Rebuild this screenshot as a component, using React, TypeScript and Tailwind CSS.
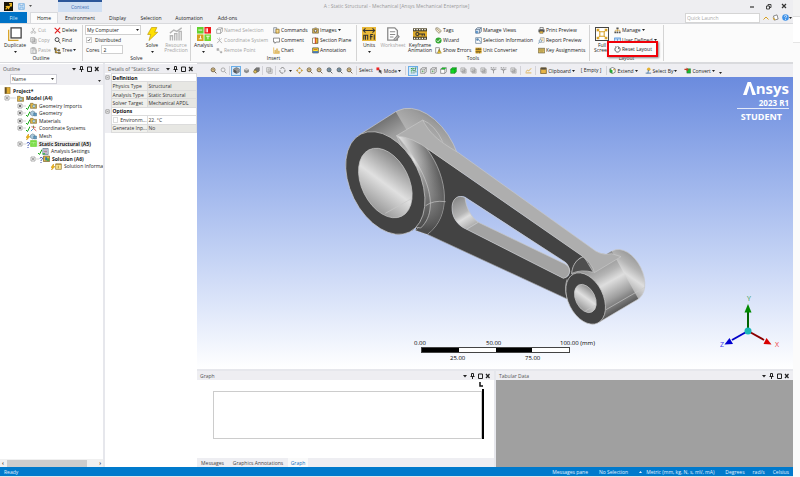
import type { ReactNode } from "react";

const ICONS: Record<string, ReactNode> = {
  duplicate: (
    <>
      <path d="M1 6v25h23" fill="none" stroke="#d9a52b" strokeWidth="4" />
      <rect x="7" y="2" width="23" height="23" fill="#fff" stroke="#444" strokeWidth="3" />
    </>
  ),
  bolt: <path d="M15 1h12l-5 11h7L9 31l4-14H6z" fill="#ffe000" stroke="#b89400" strokeWidth="1.5" />,
  resource: (
    <g fill="none" stroke="#b5b5b5" strokeWidth="3">
      <path d="M3 31V20h5v11M13 31V15h5v16M23 31V10h5v21" />
      <path d="M2 14l9-7 7 3L29 2" />
    </g>
  ),
  analysis: (
    <>
      <path d="M0 0h15v15H0z" fill="#63d22f" />
      <path d="M17 0h15v15H17z" fill="#f01818" />
      <path d="M0 17h15v15H0z" fill="#d5a11e" />
      <path d="M17 17h15v15H17z" fill="#72d62f" />
      <path d="M3 7h9M24 3v9M21 3v9M4 27h7M8 20v7M21 21h8M25 21v7" stroke="#fff" strokeWidth="2" fill="none" />
    </>
  ),
  units: (
    <>
      <path d="M0 0h32v32H0z" fill="#e9b93a" />
      <path d="M3 8h26M8 3L3 8l5 5M24 3l5 5-5 5M4 29V19h9v10M8 19v10M20 29V17h5M18 22h6M28 17v12" stroke="#333" strokeWidth="2.4" fill="none" />
    </>
  ),
  worksheet: (
    <>
      <path d="M4 2h16l6 6v22H4z" fill="#fff" stroke="#8a8a8a" strokeWidth="3" />
      <path d="M9 11h12M9 17h12M9 23h8M18 28l9-9 3 3-9 9z" stroke="#8a8a8a" strokeWidth="2.4" fill="#ccc" />
    </>
  ),
  keyframe: (
    <>
      <path d="M0 3h32v26H0z" fill="#4d4427" />
      <path d="M0 10h32v12H0z" fill="#e0ac2a" />
      <path d="M2 6h28M2 26h28" stroke="#fff" strokeWidth="3" strokeDasharray="3 3" />
      <circle cx="10" cy="16" r="3.5" fill="none" stroke="#333" strokeWidth="2.5" />
      <path d="M13 16h13v4M21 16v4" stroke="#333" strokeWidth="2.5" fill="none" />
    </>
  ),
  fullscreen: (
    <>
      <path d="M1 1h30v30H1z" fill="#fff" stroke="#444" strokeWidth="2.4" />
      <path d="M11 11h10v10H11zM11 11L5 5M21 11l6-6M11 21l-6 6M21 21l6 6M5 10V5h5M22 5h5v5M27 22v5h-5M10 27H5v-5" fill="none" stroke="#d8a021" strokeWidth="2.4" />
    </>
  ),
  cut: <path d="M4 25a4 4 0 108 0 4 4 0 10-8 0M18 25a4 4 0 108 0 4 4 0 10-8 0M11 22L21 4M20 22L10 4" fill="none" stroke="#aaa" strokeWidth="3" />,
  copy: <path d="M3 3h18v20H3zM10 9h18v20H10zM14 15h10M14 21h10" fill="#eee" stroke="#999" strokeWidth="3" />,
  paste: <path d="M4 5h22v25H4zM10 2h10v6H10zM13 13h17v16H13z" fill="#eee" stroke="#aaa" strokeWidth="3" />,
  cross: <path d="M3 4l26 24M28 3L4 29" stroke="#e01b1b" strokeWidth="5" fill="none" />,
  find: <path d="M5 12a9 9 0 1018 0 9 9 0 10-18 0M21 19l8 10" fill="none" stroke="#333" strokeWidth="4" />,
  treeIcon: <path d="M2 4h8v8H2zM18 12h8v6h-8zM20 24h9v6h-9zM6 12v15h14M6 15h12" fill="#d8a528" stroke="#333" strokeWidth="2.5" />,
  box: (
    <>
      <path d="M3 12l8-8h18v16l-8 9H3z" fill="#fff" stroke="#888" strokeWidth="3" />
      <path d="M3 12h18v17M21 12l8-8" fill="none" stroke="#888" strokeWidth="3" />
    </>
  ),
  axes: <path d="M16 2v16M16 18L4 28M16 18l12 10M5 5l22 22M27 6L6 25" stroke="#b2b2b2" strokeWidth="3" fill="none" />,
  remote: <path d="M4 7h9v9H4zM13 16l6 4M20 20h7v7h-7z" fill="#aaa" stroke="#aaa" strokeWidth="2" />,
  commands: (
    <>
      <path d="M3 3h14v24H3z" fill="#e9eef5" stroke="#6d7681" strokeWidth="3" />
      <path d="M13 10h15v18H13z" fill="#f0c65d" stroke="#7e6933" strokeWidth="3" />
      <path d="M17 16h7M17 22h7" stroke="#fff" strokeWidth="2" />
    </>
  ),
  comment: <path d="M2 5h28v18H14l-5 6v-6H2z" fill="#fff" stroke="#555" strokeWidth="3" />,
  chart: (
    <>
      <path d="M3 2v27h27" fill="none" stroke="#e1a82d" strokeWidth="3" />
      <path d="M8 28V15h5v13M16 28V8h5v20M24 28V18h5v10" fill="#efca70" stroke="#c38c22" strokeWidth="1.5" />
    </>
  ),
  camera: (
    <>
      <path d="M2 8h7l3-4h9l3 4h6v20H2z" fill="#d8b14c" stroke="#555" strokeWidth="2.5" />
      <circle cx="16" cy="17" r="6" fill="#eee" stroke="#333" strokeWidth="3" />
    </>
  ),
  section: (
    <>
      <path d="M3 5h24v24H3z" fill="#e8b32e" stroke="#463d2a" strokeWidth="3" />
      <path d="M4 6h10v22H4z" fill="#fff" />
      <path d="M15 2v29" stroke="#d62a20" strokeWidth="4" />
    </>
  ),
  annotation: (
    <>
      <path d="M3 4h26v23H3z" fill="#ffe32f" stroke="#383838" strokeWidth="3" />
      <path d="M4 19h24v8H4z" fill="#3d73be" />
      <path d="M8 11h15" stroke="#c62b1c" strokeWidth="3" />
    </>
  ),
  tag: <path d="M4 4h11l14 14-10 11L4 15zM9 8l14 14" fill="#f7edcf" stroke="#766d56" strokeWidth="3" />,
  wizard: (
    <>
      <circle cx="16" cy="16" r="14" fill="#35a834" />
      <path d="M8 16l6 6 10-12" stroke="#fff" strokeWidth="4" fill="none" />
    </>
  ),
  errors: (
    <>
      <path d="M3 3h17v25H3z" fill="#fff" stroke="#6b6b6b" strokeWidth="3" />
      <path d="M19 9l10 19H11z" fill="#ffd62f" stroke="#776324" strokeWidth="2" />
      <path d="M19 15v7" stroke="#333" strokeWidth="3" />
    </>
  ),
  views: (
    <>
      <path d="M3 11l8-8h18v17l-8 8H3z" fill="#d7e6f5" stroke="#4d6076" strokeWidth="3" />
      <path d="M3 11h18v17M21 11l8-8" stroke="#4d6076" strokeWidth="3" fill="none" />
      <path d="M3 18h10v11H3z" fill="#5c93c9" />
    </>
  ),
  info: (
    <>
      <path d="M3 3h26v26H3z" fill="#fff" stroke="#55718b" strokeWidth="3" />
      <path d="M8 8h7v7H8zM18 12l8 13" fill="#62a3da" stroke="#46749f" strokeWidth="3" />
    </>
  ),
  converter: (
    <>
      <path d="M2 3h28v26H2z" fill="#dba72a" />
      <path d="M3 11h26M3 21h26M9 5v6M16 5v6M23 5v6M9 23v6M20 23v6" stroke="#5a491f" strokeWidth="3" />
    </>
  ),
  print: (
    <>
      <path d="M9 2h15v9H9z" fill="#fff" stroke="#555" strokeWidth="3" />
      <path d="M2 11h28v13H2z" fill="#5a5a5a" />
      <path d="M8 19h15v10H8z" fill="#e9b944" stroke="#4b4635" strokeWidth="2" />
    </>
  ),
  report: (
    <>
      <path d="M11 3h17v21H11z" fill="#fff" stroke="#999" strokeWidth="3" />
      <path d="M15 9h9M15 15h9" stroke="#d8a021" strokeWidth="3" />
      <circle cx="11" cy="18" r="6" fill="#e6edf4" stroke="#6c8fae" strokeWidth="3" />
      <path d="M7 23l-5 7" stroke="#6c8fae" strokeWidth="4" />
    </>
  ),
  keyboard: (
    <>
      <path d="M1 6h30v21H1z" fill="#e3c463" stroke="#5d5439" strokeWidth="3" />
      <path d="M5 12h22M5 17h22M9 22h14" stroke="#75663c" strokeWidth="2.5" strokeDasharray="3 2" />
    </>
  ),
  manage: (
    <>
      <path d="M11 2h10v8H11zM2 21h8v8H2zM12 21h8v8h-8zM23 21h7v8h-7z" fill="#555" />
      <path d="M16 9v12M6 21v-6h21v6" stroke="#d1a035" strokeWidth="3" fill="none" />
    </>
  ),
  userDefined: <path d="M2 4h28v24H2zM2 9h28M16 9v19" fill="#e7f1fc" stroke="#3a87d8" strokeWidth="3" />,
  reset: <path d="M11 5A12 12 0 1023 6M23 6l-7-4M23 6l-3 8M11 5L6 3" fill="none" stroke="#333" strokeWidth="3.4" />,
  zoom: (
    <>
      <circle cx="14" cy="13" r="9" fill="#fbe29d" stroke="#68563a" strokeWidth="4" />
      <path d="M20 20l9 9M10 13h8" stroke="#68563a" strokeWidth="4" />
    </>
  ),
  zoomGray: <path d="M5 13a9 9 0 1018 0 9 9 0 10-18 0M20 20l9 9" fill="none" stroke="#a3a3a3" strokeWidth="4" />,
  zoomBlue: (
    <>
      <circle cx="14" cy="13" r="9" fill="#8eb9d8" stroke="#4d5356" strokeWidth="4" />
      <path d="M20 20l9 9M14 8v10" stroke="#4d5356" strokeWidth="4" />
    </>
  ),
  cube: (
    <>
      <path d="M16 2l13 7v14l-13 7-13-7V9z" fill="#8b8f93" stroke="#555" strokeWidth="2" />
      <path d="M16 16v14L3 23V9z" fill="#555" />
      <path d="M3 9l13 7 13-7" stroke="#bbb" strokeWidth="2" fill="none" />
    </>
  ),
  flatCube: (
    <>
      <path d="M16 6l11 5v12l-11 6-11-6V11z" fill="#8d8d8d" />
      <path d="M16 6l11 5-11 6-11-6z" fill="#c9c9c9" />
    </>
  ),
  wireGear: (
    <>
      <path d="M8 10l7-7h14v14l-6 6H8z" fill="#777" stroke="#555" strokeWidth="2" />
      <circle cx="10" cy="21" r="7" fill="#e3c25e" stroke="#6b5b2c" strokeWidth="3" />
    </>
  ),
  wireCube: (
    <>
      <path d="M3 10l7-7h19v19l-7 7H3z" fill="#f4f4f4" stroke="#666" strokeWidth="2.5" />
      <path d="M3 10h19v19M22 10l7-7" stroke="#666" strokeWidth="2.5" fill="none" />
      <path d="M8 16h8v8H8z" fill="#6ca66c" />
    </>
  ),
  greenTop: (
    <>
      <path d="M3 10l7-7h19v19l-7 7H3z" fill="#fff" stroke="#555" strokeWidth="2.5" />
      <path d="M3 10l7-7h19l-7 8z" fill="#11c922" />
      <path d="M3 10h19v19" stroke="#555" strokeWidth="2.5" fill="none" />
    </>
  ),
  greenCube: (
    <>
      <path d="M3 10l7-7h19v19l-7 7H3z" fill="#11d722" stroke="#14751d" strokeWidth="2.5" />
      <path d="M3 10h19v19M22 10l7-7" stroke="#14751d" strokeWidth="2.5" fill="none" />
    </>
  ),
  grayCube: <path d="M4 4h18v18H4zM10 10h18v18H10zM14 16h9v8h-9z" fill="#eee" stroke="#8a8a8a" strokeWidth="2.5" />,
  filter: <path d="M3 3h7M14 3h6M25 3h4M3 10h7M23 10h6M9 10h13l-6 8-3-3zM16 16v13" fill="none" stroke="#777" strokeWidth="3" />,
  picks: (
    <>
      <path d="M4 4h6v6H4zM15 4h5v5h-5zM4 15h6v5H4z" fill="#35b342" />
      <path d="M13 3v13h13M4 27h8M18 20v10M22 4h8M25 4v10M22 22h8" stroke="#33784b" strokeWidth="3" fill="none" />
    </>
  ),
  rotate: <path d="M7 7a12 12 0 0118 0M27 12a12 12 0 01-4 13M19 28A12 12 0 014 14" fill="none" stroke="#666" strokeWidth="3.5" />,
  pan: <path d="M16 1l5 7H11zM16 31l5-7H11zM1 16l7-5v10zM31 16l-7-5v10z" fill="#e6a719" stroke="#9b7117" strokeWidth="1.5" />,
  mode: (
    <>
      <path d="M2 2h13v13H2z" fill="#ed2424" />
      <path d="M13 10l16 9-7 2 5 8-4 2-5-8-5 4z" fill="#444" />
    </>
  ),
  graph: <path d="M3 27h26M3 22l8-7 6 3L28 6" stroke="#d8a02b" strokeWidth="3.5" fill="none" />,
  clip: (
    <>
      <path d="M3 4h26v26H3z" fill="#e7b446" stroke="#5d4922" strokeWidth="3" />
      <path d="M5 3h22v9H5z" fill="#554e40" />
    </>
  ),
  extend: (
    <>
      <path d="M4 8l12-6 12 6v16l-12 6-12-6z" fill="#fff" stroke="#555" strokeWidth="3" />
      <path d="M4 8l12 7v15L4 24z" fill="#27a737" />
      <path d="M18 9h10l-5 8z" fill="#d9a737" />
    </>
  ),
  selectBy: (
    <>
      <circle cx="17" cy="10" r="8" fill="#e4b132" />
      <path d="M16 14l-3 15M3 28h25" stroke="#4c77a2" strokeWidth="4" />
    </>
  ),
  convert: (
    <>
      <path d="M13 8h17v20H13z" fill="#16ba30" stroke="#276b32" strokeWidth="2" />
      <path d="M2 8h10V2l9 10-9 8v-6H2z" fill="#c43b24" />
    </>
  ),
  book: (
    <>
      <path d="M4 1h24v30H4z" fill="#e2ad2f" stroke="#6c5223" strokeWidth="2" />
      <path d="M5 2h7v28H5z" fill="#5b4a28" />
    </>
  ),
  folder: (
    <>
      <path d="M2 6h12l3 5h13v18H2z" fill="#e3b541" stroke="#705927" strokeWidth="2.5" />
      <circle cx="18" cy="19" r="6" fill="#eaf3f7" stroke="#39778b" strokeWidth="3" />
    </>
  ),
  geometry: (
    <>
      <path d="M2 10l10-6 10 5v12l-10 6-10-6z" fill="#a9c9dd" stroke="#527084" strokeWidth="2.5" />
      <path d="M17 14h13v13H17z" fill="#5d9bc5" stroke="#416580" strokeWidth="2" />
    </>
  ),
  coords: (
    <>
      <path d="M16 16V3" stroke="#2ca82c" strokeWidth="4" />
      <path d="M16 16L4 28" stroke="#3c8dd1" strokeWidth="4" />
      <path d="M16 16l13 11M6 8l20 3" stroke="#d75353" strokeWidth="4" />
    </>
  ),
  staticS: (
    <>
      <path d="M1 1h30v30H1z" fill="#6bd62f" />
      <path d="M6 10h20M9 10v9M16 10v9M23 10v9M6 23h20" stroke="#d9ffd0" strokeWidth="2" />
    </>
  ),
  settings: (
    <>
      <path d="M4 2h24v28H4z" fill="#d7e4ef" stroke="#4d6a82" strokeWidth="3" />
      <path d="M8 9h15M8 16h15M8 23h15" stroke="#9e5972" strokeWidth="3" />
      <path d="M3 23h11v7H3z" fill="#44b552" />
    </>
  ),
  solution: (
    <>
      <path d="M2 5h28v25H2z" fill="#e9b940" stroke="#66572d" strokeWidth="3" />
      <path d="M10 10h9v15h-9z" fill="#3478a7" />
      <path d="M19 15h8v12h-8z" fill="#3daa52" />
    </>
  ),
  note: (
    <>
      <path d="M3 4h26v25H3z" fill="#ffe892" stroke="#8b7130" strokeWidth="3" />
      <path d="M4 6h24M15 12v12" stroke="#ae8a2f" strokeWidth="4" />
    </>
  ),
  save: <path d="M3 3h26v26H3zM9 3v9h14V3M9 29V19h14v10" fill="#d5e8fb" stroke="#62a5df" strokeWidth="3" />,
  feedback: (
    <>
      <path d="M7 9l16-5 5 19-17 5z" fill="#fff" stroke="#555" strokeWidth="3" />
      <path d="M2 15l7 13 7-4z" fill="#d8a021" />
    </>
  ),
  help: (
    <>
      <circle cx="16" cy="16" r="15" fill="#3e91e8" />
      <path d="M11 12c0-8 11-7 10-1 0 4-5 4-5 9M16 23v4" fill="none" stroke="#fff" strokeWidth="3.5" />
    </>
  ),
};

function Icon({ name, className = "size-[7px]" }: { name: string; className?: string }) {
  return (
    <svg viewBox="0 0 32 32" className={`shrink-0 ${className}`} aria-hidden="true">
      {ICONS[name]}
    </svg>
  );
}

function Caret({ className = "" }: { className?: string }) {
  return (
    <svg viewBox="0 0 6 4" className={`h-[2px] w-[3px] shrink-0 ${className}`} aria-hidden="true">
      <path d="M0 0h6L3 4z" fill="currentColor" />
    </svg>
  );
}

type Command = { icon: string; label: string; off?: boolean; menu?: boolean };

function CommandColumn({ items, className }: { items: Command[]; className: string }) {
  return (
    <div className={`flex shrink-0 flex-col ${className}`}>
      {items.map((c) => (
        <button
          key={c.label}
          className={`flex h-[10px] items-center gap-px whitespace-nowrap ${c.off ? "text-[#a5a5a5]" : "text-[#222]"}`}
        >
          <Icon name={c.icon} />
          {c.label}
          {c.menu && <Caret />}
        </button>
      ))}
    </div>
  );
}

function BigButton({ icon, lines, off, menu, className }: { icon: string; lines: string[]; off?: boolean; menu?: boolean; className: string }) {
  return (
    <button className={`flex shrink-0 flex-col items-center pt-[2px] ${off ? "text-[#a5a5a5]" : "text-[#222]"} ${className}`}>
      <Icon name={icon} className="size-[14px]" />
      <span className="mt-[2px] flex flex-col whitespace-nowrap leading-[5px]">
        {lines.map((l) => (
          <span key={l}>{l}</span>
        ))}
      </span>
      {menu && <Caret className="mt-[3px]" />}
    </button>
  );
}

function Group({ title, className, children }: { title: string; className: string; children: ReactNode }) {
  return (
    <section className={`my-px flex shrink-0 flex-col border-r border-[#d4d4d4] ${className}`}>
      <div className="flex h-[30px]">{children}</div>
      <div className="text-center leading-[6px]">{title}</div>
    </section>
  );
}

const OUTLINE_EDIT: Command[] = [
  { icon: "cut", label: "Cut", off: true },
  { icon: "copy", label: "Copy", off: true },
  { icon: "paste", label: "Paste", off: true },
];
const OUTLINE_FIND: Command[] = [
  { icon: "cross", label: "Delete" },
  { icon: "find", label: "Find" },
  { icon: "treeIcon", label: "Tree", menu: true },
];
const INSERT_A: Command[] = [
  { icon: "box", label: "Named Selection", off: true },
  { icon: "axes", label: "Coordinate System", off: true },
  { icon: "remote", label: "Remote Point", off: true },
];
const INSERT_B: Command[] = [
  { icon: "commands", label: "Commands" },
  { icon: "comment", label: "Comment" },
  { icon: "chart", label: "Chart" },
];
const INSERT_C: Command[] = [
  { icon: "camera", label: "Images", menu: true },
  { icon: "section", label: "Section Plane" },
  { icon: "annotation", label: "Annotation" },
];
const TOOLS_A: Command[] = [
  { icon: "tag", label: "Tags" },
  { icon: "wizard", label: "Wizard" },
  { icon: "errors", label: "Show Errors" },
];
const TOOLS_B: Command[] = [
  { icon: "views", label: "Manage Views" },
  { icon: "info", label: "Selection Information" },
  { icon: "converter", label: "Unit Converter" },
];
const TOOLS_C: Command[] = [
  { icon: "print", label: "Print Preview" },
  { icon: "report", label: "Report Preview" },
  { icon: "keyboard", label: "Key Assignments" },
];

function Ribbon() {
  return (
    <div className="flex h-[40px] border-y border-[#d9dadd] bg-[#fbfbfb] text-[#222]">
      <Group title="Outline" className="w-[83px]">
        <BigButton icon="duplicate" lines={["Duplicate"]} menu className="w-[30px]" />
        <CommandColumn items={OUTLINE_EDIT} className="w-[24px]" />
        <CommandColumn items={OUTLINE_FIND} className="w-[28px]" />
      </Group>
      <Group title="Solve" className="w-[108px]">
        <div className="flex w-[58px] flex-col pl-[2px]">
          <div className="flex items-center">
            <select aria-label="Solve process" className="h-[10px] w-full appearance-none border border-[#d0d0d0] bg-white px-px">
              <option>My Computer</option>
            </select>
            <Caret className="-ml-[5px]" />
          </div>
          <label className="flex h-[10px] items-center gap-[3px] pl-px">
            <input type="checkbox" defaultChecked className="peer sr-only" />
            <svg viewBox="0 0 12 12" className="size-[6px] border border-[#ccc] bg-white" aria-hidden="true">
              <path d="M2 6l3 3 5-7" fill="none" stroke="#333" strokeWidth="2" />
            </svg>
            Distributed
          </label>
          <label className="flex h-[9px] items-center gap-[2px] pl-px">
            Cores
            <input type="text" defaultValue="2" className="h-[9px] w-[22px] border border-[#d0d0d0] bg-white px-px" />
          </label>
        </div>
        <BigButton icon="bolt" lines={["Solve"]} menu className="w-[22px]" />
        <BigButton icon="resource" lines={["Resource", "Prediction"]} off className="w-[26px]" />
      </Group>
      <Group title="Insert" className="w-[166px]">
        <BigButton icon="analysis" lines={["Analysis"]} menu className="w-[25px]" />
        <CommandColumn items={INSERT_A} className="w-[57px]" />
        <CommandColumn items={INSERT_B} className="w-[39px]" />
        <CommandColumn items={INSERT_C} className="w-[44px]" />
      </Group>
      <Group title="Tools" className="w-[233px]">
        <BigButton icon="units" lines={["Units"]} menu className="w-[24px]" />
        <BigButton icon="worksheet" lines={["Worksheet"]} off className="w-[24px]" />
        <BigButton icon="keyframe" lines={["Keyframe", "Animation"]} className="w-[30px]" />
        <CommandColumn items={TOOLS_A} className="w-[40px]" />
        <CommandColumn items={TOOLS_B} className="w-[63px]" />
        <CommandColumn items={TOOLS_C} className="w-[50px]" />
      </Group>
      <Group title="Layout" className="w-[74px]">
        <BigButton icon="fullscreen" lines={["Full", "Screen"]} className="w-[24px]" />
        <div className="relative flex flex-col">
          <CommandColumn
            items={[
              { icon: "manage", label: "Manage", menu: true },
              { icon: "userDefined", label: "User Defined", menu: true },
            ]}
            className="w-[46px]"
          />
          <button className="absolute -left-[7px] top-[16px] flex h-[16px] w-[51px] items-center gap-px whitespace-nowrap border-[2px] border-[#f00008] bg-[#fcfcfc] pl-[5px] shadow-[1px_1px_2px_#888]">
            <Icon name="reset" />
            Reset Layout
          </button>
        </div>
      </Group>
    </div>
  );
}

const TABS = [
  { label: "Environment", width: "w-[44px]" },
  { label: "Display", width: "w-[31px]" },
  { label: "Selection", width: "w-[36px]" },
  { label: "Automation", width: "w-[40px]" },
  { label: "Add-ons", width: "w-[37px]" },
];

function TitleBar() {
  return (
    <header className="bg-[#eeeef1]">
      <div className="grid h-[12px] grid-cols-[58px_44px_1fr_44px] items-center">
        <div className="flex items-center pl-[4px]">
          <svg viewBox="0 0 16 16" className="size-[9px]" aria-hidden="true">
            <path d="M0 0h16v16H0z" fill="#171309" />
            <path d="M3 13l4-5 2 2 4-6M3 8h5v5M9 3h4v5" fill="none" stroke="#f2b91d" strokeWidth="2.2" />
          </svg>
          <Icon name="save" className="ml-[5px] size-[7px]" />
          <Caret className="ml-[4px] text-[#555]" />
        </div>
        <div className="flex h-full items-center justify-center border-t-2 border-[#2b579a] bg-[#d0dff2] text-[#3e6db5]">Context</div>
        <h1 className="pr-[58px] text-center text-[#999]">A : Static Structural - Mechanical [Ansys Mechanical Enterprise]</h1>
        <svg viewBox="0 0 44 12" className="h-[12px] w-[44px]" fill="none" stroke="#333" aria-hidden="true">
          <path d="M1 7h4" strokeWidth="1.2" />
          <path d="M17.5 6h3v3h-3zM19 6V4.5h3v3h-1.5" strokeWidth=".9" />
          <path d="M33 4l4 4M37 4l-4 4" strokeWidth="1.2" />
        </svg>
      </div>
      <div className="flex h-[11px] items-stretch text-[#222]">
        <button className="w-[27px] bg-[#0072c6] text-[#cfe6f7]">File</button>
        <button className="ml-[3px] w-[28px] border-x border-t border-[#d9dadd] bg-[#fbfbfb]">Home</button>
        {TABS.map((t) => (
          <button key={t.label} className={t.width}>
            {t.label}
          </button>
        ))}
        <div className="ml-auto flex items-center gap-[3px] pr-px">
          <input aria-label="Quick Launch" placeholder="Quick Launch" className="h-[10px] w-[75px] border border-[#d5d5d5] bg-white px-px placeholder:text-[#aaa]" />
          <svg viewBox="0 0 12 12" className="size-[6px]" aria-hidden="true">
            <path d="M1 9l5-5 5 5" fill="none" stroke="#d8a021" strokeWidth="2" />
          </svg>
          <Icon name="feedback" />
          <span className="flex items-center">
            <Icon name="help" />
            <Caret />
          </span>
        </div>
      </div>
    </header>
  );
}

function PanelHeader({ title, className = "" }: { title: string; className?: string }) {
  return (
    <div className={`flex h-[9px] shrink-0 items-center overflow-hidden bg-[#eeeef2] pl-[3px] pr-[4px] text-[#555] ${className}`}>
      <h2 className="whitespace-nowrap">{title}</h2>
      <div className="mx-[2px] h-[3px] min-w-0 flex-1 bg-[radial-gradient(#c5c5ca_30%,transparent_35%)] bg-[size:2px_2px]" />
      <svg viewBox="0 0 28 8" className="h-[8px] w-[28px] shrink-0 text-[#222]" fill="none" stroke="currentColor" aria-hidden="true">
        <path d="M1 3h4L3 5.5z" fill="currentColor" stroke="none" />
        <path d="M9.500 1.500h2v3h-2zM8.500 4.500h4M10.500 4.500V7" />
        <path d="M16.500 2h4v4.500h-4z" />
        <path d="M24 2l3.500 4M27.500 2L24 6" strokeWidth="1.2" />
      </svg>
    </div>
  );
}

type Node = { label: string; icon: string; pad: string; mark?: "check" | "bolt" | "ask"; expand?: "+" | "-"; bold?: boolean; picked?: boolean };

const NODES: Node[] = [
  { label: "Project*", icon: "book", pad: "pl-[4px]", bold: true },
  { label: "Model (A4)", icon: "folder", pad: "pl-[4px]", expand: "-", bold: true },
  { label: "Geometry Imports", icon: "folder", pad: "pl-[17px]", expand: "+", mark: "check" },
  { label: "Geometry", icon: "geometry", pad: "pl-[17px]", expand: "+", mark: "check" },
  { label: "Materials", icon: "folder", pad: "pl-[17px]", expand: "+", mark: "check" },
  { label: "Coordinate Systems", icon: "coords", pad: "pl-[17px]", expand: "+", mark: "check" },
  { label: "Mesh", icon: "geometry", pad: "pl-[26px]", mark: "bolt" },
  { label: "Static Structural (A5)", icon: "staticS", pad: "pl-[17px]", expand: "-", mark: "ask", bold: true, picked: true },
  { label: "Analysis Settings", icon: "settings", pad: "pl-[38px]", mark: "check" },
  { label: "Solution (A6)", icon: "solution", pad: "pl-[30px]", expand: "-", mark: "ask", bold: true },
  { label: "Solution Informat", icon: "note", pad: "pl-[51px]", mark: "bolt" },
];

function Mark({ kind }: { kind: "check" | "bolt" | "ask" }) {
  return (
    <svg viewBox="0 0 8 12" className="mt-[2px] h-[6px] w-[4px] shrink-0" aria-hidden="true">
      {kind === "check" && <path d="M0 8l3 3 5-10" stroke="#18a818" strokeWidth="2" fill="none" />}
      {kind === "bolt" && <path d="M5 0L0 7h3l-2 5 7-7H5z" fill="#f4bb13" stroke="#c88a00" />}
      {kind === "ask" && <path d="M2 3c0-3 5-3 5 0 0 2-3 2-3 5M4 10v2" fill="none" stroke="#263fa8" strokeWidth="1.8" />}
    </svg>
  );
}

function Outline() {
  return (
    <aside className="flex w-[103px] shrink-0 flex-col overflow-hidden bg-white">
      <PanelHeader title="Outline" className="mt-px" />
      <div className="flex h-[12px] items-center justify-between bg-[#eeeef2] pl-[10px] pr-[2px]">
        <button className="flex h-[10px] w-[47px] items-center justify-between border border-[#d0d0d8] bg-white px-px pr-[2px]">
          Name
          <Caret />
        </button>
        <Caret className="mt-[4px]" />
      </div>
      <ul className="mt-[2px] flex h-[83px] flex-col justify-between text-[#222]">
        {NODES.map((n) => (
          <li key={n.label} className={`flex h-[7px] items-center whitespace-nowrap ${n.pad}`}>
            {n.expand && (
              <svg viewBox="0 0 13 8" className={`h-[8px] shrink-0 ${n.mark ? "w-[9px]" : "w-[13px]"}`} preserveAspectRatio="xMinYMid slice" fill="none" aria-hidden="true">
                <path d="M1 2h4v4H1z" fill="#fff" stroke="#999" strokeWidth=".8" />
                <path d={n.expand === "+" ? "M2 4h2M3 3v2" : "M2 4h2"} stroke="#222" strokeWidth=".8" />
                <path d="M5.5 4H12" stroke="#ccc" strokeWidth=".8" />
              </svg>
            )}
            {n.mark && <Mark kind={n.mark} />}
            <Icon name={n.icon} />
            <span className={`pl-[2px] ${n.bold ? "font-bold" : ""} ${n.picked ? "bg-[#ececec]" : ""}`}>{n.label}</span>
          </li>
        ))}
      </ul>
      <div className="mt-auto flex h-[8px] items-center gap-[3px] bg-[#f0f0f0] px-[2px] font-bold text-[#333]">
        <span>‹</span>
        <div className="h-[7px] w-[80px] bg-[#cdcdcd]" />
        <span className="ml-auto">›</span>
      </div>
    </aside>
  );
}

const DETAILS: { key: string; value?: string; plain?: boolean }[] = [
  { key: "Definition" },
  { key: "Physics Type", value: "Structural" },
  { key: "Analysis Type", value: "Static Structural" },
  { key: "Solver Target", value: "Mechanical APDL" },
  { key: "Options" },
  { key: "Environm...", value: "22. °C", plain: true },
  { key: "Generate Inp...", value: "No" },
];

function Details() {
  return (
    <aside className="flex w-[92px] shrink-0 flex-col overflow-hidden bg-white">
      <PanelHeader title={'Details of "Static Struc'} className="mt-px" />
      <table className="h-[60px] w-full table-fixed border-collapse text-[#333]">
        <colgroup>
          <col className="w-[6px]" />
          <col className="w-[36px]" />
          <col />
        </colgroup>
        <tbody>
          {DETAILS.map((d) =>
            d.value ? (
              <tr key={d.key}>
                <td className="bg-[#eeeef2] p-0" />
                <td className={`whitespace-nowrap border border-[#dcdcdc] p-0 pl-px ${d.plain ? "bg-white" : "bg-[#f0f0ec]"}`}>
                  {d.plain ? (
                    <label className="flex items-center gap-[2px]">
                      <input type="checkbox" className="size-[6px] appearance-none border border-[#ddd] bg-white" />
                      {d.key}
                    </label>
                  ) : (
                    d.key
                  )}
                </td>
                <td className={`whitespace-nowrap border border-[#dcdcdc] p-0 pl-px ${d.plain ? "bg-white" : "bg-[#e7e7e3]"}`}>{d.value}</td>
              </tr>
            ) : (
              <tr key={d.key}>
                <td className="bg-[#eeeef2] p-0">
                  <svg viewBox="0 0 6 6" className="size-[5px]" aria-hidden="true">
                    <path d="M1 1h4v4H1zM2 3h2" fill="#fff" stroke="#777" strokeWidth=".8" />
                  </svg>
                </td>
                <th colSpan={2} className="border border-[#dcdcdc] p-0 pl-px text-left font-bold text-[#111]">
                  {d.key}
                </th>
              </tr>
            ),
          )}
        </tbody>
      </table>
    </aside>
  );
}

function ToolButton({ name, active, label }: { name: string; active?: boolean; label: string }) {
  return (
    <button aria-label={label} className={`flex size-[10px] items-center justify-center ${active ? "border border-[#6baee8] bg-[#d4e8fa]" : ""}`}>
      <Icon name={name} />
    </button>
  );
}

function Divider({ tight }: { tight?: boolean }) {
  return <span className={`h-[9px] w-px bg-[#d2d2d8] ${tight ? "mx-px" : "mx-[2px]"}`} />;
}

function MenuButton({ icon, label }: { icon: string; label: string }) {
  return (
    <button className="flex items-center gap-px whitespace-nowrap">
      <Icon name={icon} />
      {label}
      <Caret />
    </button>
  );
}

function GraphicsToolbar() {
  return (
    <div className="flex h-[14px] shrink-0 items-center border-t border-[#d9dadd] bg-[#eeeef2] pl-[11px] text-[#222]">
      <ToolButton name="zoom" label="Zoom in" />
      <ToolButton name="zoomGray" label="Zoom out" />
      <Divider tight />
      <ToolButton name="cube" active label="Shaded exterior and edges" />
      <ToolButton name="flatCube" label="Shaded exterior" />
      <ToolButton name="wireGear" label="Wireframe" />
      <Divider tight />
      <ToolButton name="copy" label="Copy view" />
      <Divider tight />
      <ToolButton name="rotate" label="Rotate" />
      <Caret className="mx-[2px]" />
      <ToolButton name="pan" label="Pan" />
      <ToolButton name="zoom" label="Zoom" />
      <ToolButton name="zoom" label="Box zoom" />
      <ToolButton name="zoomBlue" label="Fit" />
      <ToolButton name="zoomBlue" label="Magnifier" />
      <ToolButton name="zoom" label="Previous view" />
      <Divider />
      <div className="flex gap-[3px] pr-[2px]">
        <span>Select</span>
        <MenuButton icon="mode" label="Mode" />
      </div>
      <Divider />
      <ToolButton name="picks" active label="Smart select" />
      <ToolButton name="wireCube" label="Vertex" />
      <ToolButton name="wireCube" label="Edge" />
      <ToolButton name="greenTop" label="Face" />
      <ToolButton name="greenCube" label="Body" />
      <ToolButton name="grayCube" label="Node" />
      <ToolButton name="grayCube" label="Element face" />
      <ToolButton name="grayCube" label="Element" />
      <ToolButton name="filter" label="Hit point" />
      <ToolButton name="filter" label="Filter" />
      <ToolButton name="grayCube" label="Coordinates" />
      <Divider />
      <ToolButton name="graph" label="Chart" />
      <Divider />
      <div className="flex gap-[6px] pl-[2px] pr-[3px]">
        <MenuButton icon="clip" label="Clipboard" />
        <span>[ Empty ]</span>
      </div>
      <Divider />
      <div className="flex gap-[7px]">
        <MenuButton icon="extend" label="Extend" />
        <MenuButton icon="selectBy" label="Select By" />
        <MenuButton icon="convert" label="Convert" />
      </div>
      <Caret className="ml-[4px] mt-[5px]" />
    </div>
  );
}

function ConnectingRod() {
  return (
    <svg viewBox="0 0 990 735" className="absolute left-[133px] top-[13px] h-[245px] w-[330px]" stroke="#c9c9c9" strokeWidth="2" fill="none" role="img" aria-label="Connecting rod">
      <defs>
        <linearGradient id="boss" gradientUnits="userSpaceOnUse" x1="110" y1="110" x2="290" y2="400">
          <stop offset="0" stopColor="#6c6c6c" />
          <stop offset=".18" stopColor="#9c9c9c" />
          <stop offset=".35" stopColor="#b4b4b4" />
          <stop offset=".46" stopColor="#e4e4e4" />
          <stop offset=".6" stopColor="#a2a2a2" />
          <stop offset="1" stopColor="#4c4c4c" />
        </linearGradient>
        <linearGradient id="bore" gradientUnits="userSpaceOnUse" x1="115" y1="185" x2="215" y2="380">
          <stop offset="0" stopColor="#707070" />
          <stop offset=".5" stopColor="#e0e0e0" />
          <stop offset=".9" stopColor="#929292" />
        </linearGradient>
        <linearGradient id="pin" gradientUnits="userSpaceOnUse" x1="795" y1="520" x2="875" y2="665">
          <stop offset="0" stopColor="#8f8f8f" />
          <stop offset=".25" stopColor="#b4b4b4" />
          <stop offset=".42" stopColor="#dedede" />
          <stop offset=".7" stopColor="#a0a0a0" />
          <stop offset="1" stopColor="#4b4b4b" />
        </linearGradient>
        <linearGradient id="pinBore" gradientUnits="userSpaceOnUse" x1="745" y1="590" x2="785" y2="665">
          <stop offset="0" stopColor="#7c7c7c" />
          <stop offset=".45" stopColor="#e0e0e0" />
          <stop offset="1" stopColor="#858585" />
        </linearGradient>
        <linearGradient id="fillet" gradientUnits="userSpaceOnUse" x1="250" y1="270" x2="345" y2="240">
          <stop offset="0" stopColor="#dcdcdc" />
          <stop offset=".45" stopColor="#9a9a9a" />
          <stop offset="1" stopColor="#434343" />
        </linearGradient>
        <linearGradient id="filletFade" gradientUnits="userSpaceOnUse" x1="0" y1="210" x2="0" y2="420">
          <stop offset="0" stopColor="#444" stopOpacity="0" />
          <stop offset=".5" stopColor="#444" stopOpacity=".35" />
          <stop offset="1" stopColor="#444" stopOpacity=".95" />
        </linearGradient>
        <linearGradient id="slot" gradientUnits="userSpaceOnUse" x1="370" y1="325" x2="425" y2="415">
          <stop offset="0" stopColor="#858585" />
          <stop offset=".5" stopColor="#b5b5b5" />
          <stop offset=".65" stopColor="#dedede" />
          <stop offset="1" stopColor="#a5a5a5" />
        </linearGradient>
      </defs>

      <ellipse cx="276" cy="209" rx="164" ry="105" transform="rotate(63.7 276 209)" fill="url(#boss)" />
      <path d="M87 135L197 65 355 330 245 423z" fill="url(#boss)" stroke="none" />
      <path d="M87 135L197 65" />

      <path
        d="M285 172L760 500 793 548 712 627 292 433 257 421 280 300zM405 320C388 314 368 322 366 350 365 382 382 406 410 418L700 565Q721 562 719 540 715 520 702 514z"
        fill="#434343"
        fillRule="evenodd"
        stroke="none"
      />
      <path d="M292 433L712 627" stroke="#999" />
      <path d="M405 323C388 314 368 322 366 350 365 382 382 406 410 418L445 397C422 380 408 352 405 323z" fill="url(#slot)" />
      <path d="M445 397L705 522Q720 530 719 545 715 562 700 565L410 418z" fill="#a3a3a3" />
      <path d="M405 323L702 514Q717 522 719 545" />

      <path d="M200 137C250 143 280 155 292 178 355 265 365 380 292 433L257 421C320 370 310 260 200 137z" fill="url(#fillet)" />
      <path d="M200 137C250 143 280 155 292 178 355 265 365 380 292 433L257 421C320 370 310 260 200 137z" fill="url(#filletFade)" stroke="none" />
      <path d="M200 137C265 205 345 345 272 414L250 410 225 190z" fill="url(#boss)" />
      <path d="M287 347Q310 330 347 335" />

      <ellipse cx="166" cy="279" rx="164" ry="105" transform="rotate(63.7 166 279)" fill="#434343" />
      <ellipse cx="166" cy="279" rx="111" ry="71" transform="rotate(63.7 166 279)" fill="url(#bore)" />
      <path d="M166 370L246 325" />

      <path d="M725 552C730 515 748 503 762 499L805 545z" fill="#555" />
      <ellipse cx="885" cy="555.5" rx="82" ry="52.5" transform="rotate(63.7 885 555.5)" fill="url(#pin)" />
      <path d="M727 553L845 483 925 627 807 697z" fill="url(#pin)" stroke="none" />
      <path d="M807 697L925 627M828 659L944 592" />
      <path d="M725 550C728 520 744 505 762 500L790 547Q755 537 725 550z" fill="#4e4e4e" />
      <path d="M712 627Q702 595 711 568" />
      <ellipse cx="767" cy="625.5" rx="82" ry="52.5" transform="rotate(63.7 767 625.5)" fill="#434343" />
      <ellipse cx="766" cy="625.5" rx="45" ry="29" transform="rotate(63.7 766 625.5)" fill="url(#pinBore)" />
      <path d="M766 663L797 645" />

      <path d="M200 137L278 90C300 130 320 150 385 188L798 484Q822 497 845 491L873 500 793 548Q790 525 755 497L298 180Q250 143 200 137z" fill="#aeaeae" />
      <path d="M278 90Q315 105 338 155" />
    </svg>
  );
}

function ScaleBar() {
  return (
    <div className="absolute bottom-[7px] left-[217px] w-[182px] text-[6px] leading-[7px] text-black">
      <div className="flex">
        <span className="w-[72px]">0.00</span>
        <span className="w-[74px]">50.00</span>
        <span className="whitespace-nowrap">100.00 (mm)</span>
      </div>
      <div className="ml-[7px] flex h-[6px] w-[149px] border border-[#444]">
        <div className="flex-1 bg-black" />
        <div className="flex-1 bg-white" />
        <div className="flex-1 bg-black" />
        <div className="flex-1 bg-white" />
      </div>
      <div className="mt-[2px] flex pl-[36px]">
        <span className="w-[75px]">25.00</span>
        <span>75.00</span>
      </div>
    </div>
  );
}

function Triad() {
  return (
    <svg viewBox="0 0 60 56" className="absolute bottom-[18px] right-[13px] h-[56px] w-[60px]" fontSize="7" aria-hidden="true">
      <path d="M28 36V16" stroke="#006400" strokeWidth="2" />
      <path d="M28 9l3.500 8.500h-7z" fill="#008a00" />
      <path d="M28 36l16 9" stroke="#8b0000" strokeWidth="2" />
      <path d="M51.500 49.500l-8-.5 3-6z" fill="#d80000" />
      <path d="M28 36l-16 9" stroke="#0000c8" strokeWidth="2" />
      <path d="M4.500 49.500l5-6.500 3.500 6z" fill="#0000d0" />
      <circle cx="28" cy="36" r="3.5" fill="#19b8b8" />
      <text x="27" y="6" fill="#2b9c48">Y</text>
      <text x="55" y="52" fill="#f03c3c">X</text>
      <text x="0" y="52" fill="#3c3cf0">Z</text>
    </svg>
  );
}

function Viewport() {
  return (
    <main className="relative min-h-[292px] flex-1 overflow-hidden bg-linear-to-b from-[#6b8bde] to-white">
      <ConnectingRod />
      <div className="absolute right-[4px] top-[3px] flex w-[52px] flex-col text-right font-bold text-white">
        <span className="flex items-center justify-end text-[15px] leading-[17px]">
          <svg viewBox="0 0 14 14" className="size-[13px]" aria-hidden="true">
            <path d="M0 14L5 0h3.500L4 14zM7 3l1.500-3L14 14h-4z" fill="#fff" />
          </svg>
          <span>nsys</span>
        </span>
        <span className="text-[8px] leading-[11px]">2023 R1</span>
        <span className="border-t border-white/80 pr-[7px] pt-[2px] text-[9px] leading-[11px]">STUDENT</span>
      </div>
      <ScaleBar />
      <Triad />
    </main>
  );
}

function GraphPanel() {
  return (
    <section className="flex flex-1 flex-col bg-white">
      <PanelHeader title="Graph" />
      <div className="flex flex-1 flex-col px-[10px] pl-[16px] pt-[2px]">
        <svg viewBox="0 0 4 5" className="mr-px h-[5px] w-[4px] self-end" aria-hidden="true">
          <path d="M1 0v4h3" fill="none" stroke="#111" strokeWidth="1.5" />
        </svg>
        <div className="mt-[2px] flex h-[51px] pb-px">
          <div className="mt-[2px] flex-1 border border-[#ccc]" />
          <div className="w-[2px] bg-black" />
        </div>
      </div>
      <div className="flex h-[9px] bg-[#eeeef2] text-[#444]">
        <button className="w-[31px]">Messages</button>
        <button className="w-[60px]">Graphics Annotations</button>
        <button className="w-[20px] bg-[#fafafa] text-[#0e70c0]">Graph</button>
      </div>
    </section>
  );
}

export default function App() {
  return (
    <div className="flex min-h-screen bg-[#fbfbfb] font-['Open_Sans','Noto_Sans',sans-serif] text-[5px] leading-[6px] text-[#333]">
      <div className="flex min-w-0 flex-1 flex-col">
        <TitleBar />
        <Ribbon />
        <div className="flex flex-1 gap-[2px] bg-[#e6e7ec]">
          <Outline />
          <Details />
          <div className="-ml-[2px] flex min-w-0 flex-1 flex-col">
            <GraphicsToolbar />
            <Viewport />
            <div className="mt-[2px] flex h-[96px] shrink-0 gap-[2px]">
              <GraphPanel />
              <section className="flex flex-1 flex-col bg-[#a0a0a0]">
                <PanelHeader title="Tabular Data" />
              </section>
            </div>
          </div>
        </div>
        <footer className="flex h-[9px] shrink-0 items-center bg-[#007acc] px-[4px] text-[#e3f1fc]">
          <span>Ready</span>
          <span className="ml-auto">Messages pane</span>
          <span className="ml-[11px]">No Selection</span>
          <span className="ml-[11px] flex items-center gap-[4px]">
            <Caret className="rotate-180" />
            Metric (mm, kg, N, s, mV, mA)
          </span>
          <span className="ml-[11px]">Degrees</span>
          <span className="ml-[8px]">rad/s</span>
          <span className="ml-[8px]">Celsius</span>
        </footer>
        <div className="h-[2px] shrink-0 bg-[#e3e5e8]" />
      </div>
      <div className="flex w-[7px] shrink-0 flex-col bg-[#fbfbfb]">
        <div className="h-[17px] border-b border-[#ddd] bg-[#f3f3f3]" />
        <div className="h-[26px] border-b border-[#e5e5e5] bg-white" />
      </div>
    </div>
  );
}
